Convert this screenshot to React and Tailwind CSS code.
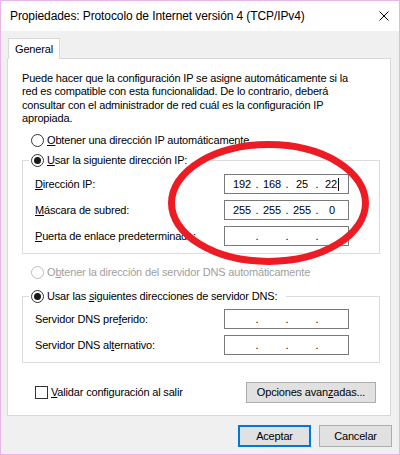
import React from "react";

const Radio = ({ checked, disabled }) => (
  <span
    className={
      disabled
        ? "flex items-center justify-center w-[13px] h-[13px] rounded-full border border-[#bcbcbc] bg-white shrink-0"
        : "flex items-center justify-center w-[13px] h-[13px] rounded-full border border-[#333333] bg-white shrink-0"
    }
  >
    {checked && <span className="w-[7px] h-[7px] rounded-full bg-[#1a1a1a]" />}
  </span>
);

const IpBox = ({ parts = ["", "", "", ""], cursor = false }) => (
  <div className="w-[125px] h-[20px] border border-[#7a7a7a] bg-white flex items-center pl-[5px] shrink-0">
    {parts.map((p, i) => (
      <React.Fragment key={i}>
        <span className="w-[24px] text-center whitespace-nowrap">
          {p}
          {cursor && i === 3 && (
            <span className="inline-block w-px h-[13px] bg-black align-middle ml-px" />
          )}
        </span>
        {i < 3 && <span className="w-[6px] text-center">.</span>}
      </React.Fragment>
    ))}
  </div>
);

const Row = ({ label, children }) => (
  <div className="h-[20px] flex items-center justify-between">
    <span className="whitespace-nowrap">{label}</span>
    {children}
  </div>
);

export default function App() {
  return (
    <div className="relative w-[400px] h-[455px] border border-[#e9b5e9] bg-[#f0f0f0] flex flex-col text-black font-['Liberation_Sans',Arial,sans-serif] text-[11px] tracking-[-0.17px] leading-[13px] overflow-hidden">
      {/* Title bar */}
      <div className="h-[30px] shrink-0 bg-white flex items-center justify-between pl-[9px] pr-[10px]">
        <span className="text-[12px] tracking-[-0.1px] whitespace-nowrap">
          Propiedades: Protocolo de Internet versión 4 (TCP/IPv4)
        </span>
        <svg width="10" height="10" viewBox="0 0 10 10">
          <path d="M0.5 0.5 L9.5 9.5 M9.5 0.5 L0.5 9.5" stroke="#000" strokeWidth="1" fill="none" />
        </svg>
      </div>

      {/* Body */}
      <div className="flex-1 flex flex-col pl-[6px] pr-[8px] pt-[7px]">
        <div className="ml-[1px] w-[52px] h-[21px] border-t border-l border-r border-[#d9d9d9] bg-white relative z-10 flex items-center justify-center">
          General
        </div>
        <div className="-mt-px h-[358px] border border-[#d9d9d9] bg-white flex flex-col">
          <p className="mt-[13px] ml-[14px] leading-[13.33px] whitespace-nowrap">
            Puede hacer que la configuración IP se asigne automáticamente si la
            <br />
            red es compatible con esta funcionalidad. De lo contrario, deberá
            <br />
            consultar con el administrador de red cuál es la configuración IP
            <br />
            apropiada.
          </p>

          <div className="mt-[8px] ml-[23px] h-[14px] flex items-center gap-[3px]">
            <Radio />
            <span className="whitespace-nowrap">
              <u>O</u>btener una dirección IP automáticamente
            </span>
          </div>

          <fieldset className="mt-[6px] ml-[14px] w-[358px] border border-[#dcdcdc] pb-[7px]">
            <legend className="ml-[6px] pl-[2px] pr-[9px]">
              <span className="flex items-center h-[14px] gap-[3px]">
                <Radio checked />
                <span className="whitespace-nowrap">
                  <u>U</u>sar la siguiente dirección IP:
                </span>
              </span>
            </legend>
            <div className="mt-[7px] flex flex-col gap-[6px] pl-[12px] pr-[30px]">
              <Row label={<><u>D</u>irección IP:</>}>
                <IpBox parts={["192", "168", "25", "22"]} cursor />
              </Row>
              <Row label={<><u>M</u>áscara de subred:</>}>
                <IpBox parts={["255", "255", "255", "0"]} />
              </Row>
              <Row label={<><u>P</u>uerta de enlace predeterminada:</>}>
                <IpBox />
              </Row>
            </div>
          </fieldset>

          <div className="mt-[11px] ml-[23px] h-[14px] flex items-center gap-[3px] text-[#a0a0a0]">
            <Radio disabled />
            <span className="whitespace-nowrap">
              O<u>b</u>tener la dirección del servidor DNS automáticamente
            </span>
          </div>

          <fieldset className="mt-[10px] ml-[14px] w-[358px] border border-[#dcdcdc] pb-[7px]">
            <legend className="ml-[6px] pl-[2px] pr-[9px]">
              <span className="flex items-center h-[14px] gap-[3px]">
                <Radio checked />
                <span className="whitespace-nowrap">
                  Usar las <u>s</u>iguientes direcciones de servidor DNS:
                </span>
              </span>
            </legend>
            <div className="mt-[6px] flex flex-col gap-[6px] pl-[12px] pr-[30px]">
              <Row label={<>Servidor DNS pre<u>f</u>erido:</>}>
                <IpBox />
              </Row>
              <Row label={<>Servidor DNS al<u>t</u>ernativo:</>}>
                <IpBox />
              </Row>
            </div>
          </fieldset>

          <div className="mt-[19px] flex items-center justify-between pl-[27px] pr-[14px]">
            <div className="flex items-center gap-[3px]">
              <span className="w-[13px] h-[13px] border border-[#333333] bg-white shrink-0" />
              <span className="whitespace-nowrap">
                <u>V</u>alidar configuración al salir
              </span>
            </div>
            <button className="w-[130px] h-[21px] bg-[#e1e1e1] border border-[#adadad] flex items-center justify-center whitespace-nowrap">
              Opciones avan<u>z</u>adas...
            </button>
          </div>
        </div>

        <div className="mt-[9px] -mr-px flex justify-end gap-[8px]">
          <button className="w-[73px] h-[22px] bg-[#e1e1e1] border-2 border-[#0078d7] flex items-center justify-center">
            Aceptar
          </button>
          <button className="w-[73px] h-[22px] bg-[#e1e1e1] border border-[#adadad] flex items-center justify-center">
            Cancelar
          </button>
        </div>
      </div>

      {/* Red hand-drawn ellipse annotation */}
      <svg
        className="absolute -left-px -top-px pointer-events-none"
        width="400"
        height="455"
        viewBox="0 0 400 455"
      >
        <ellipse cx="268.5" cy="203" rx="97" ry="58.5" fill="none" stroke="#ed1c24" strokeWidth="7" />
      </svg>
    </div>
  );
}
